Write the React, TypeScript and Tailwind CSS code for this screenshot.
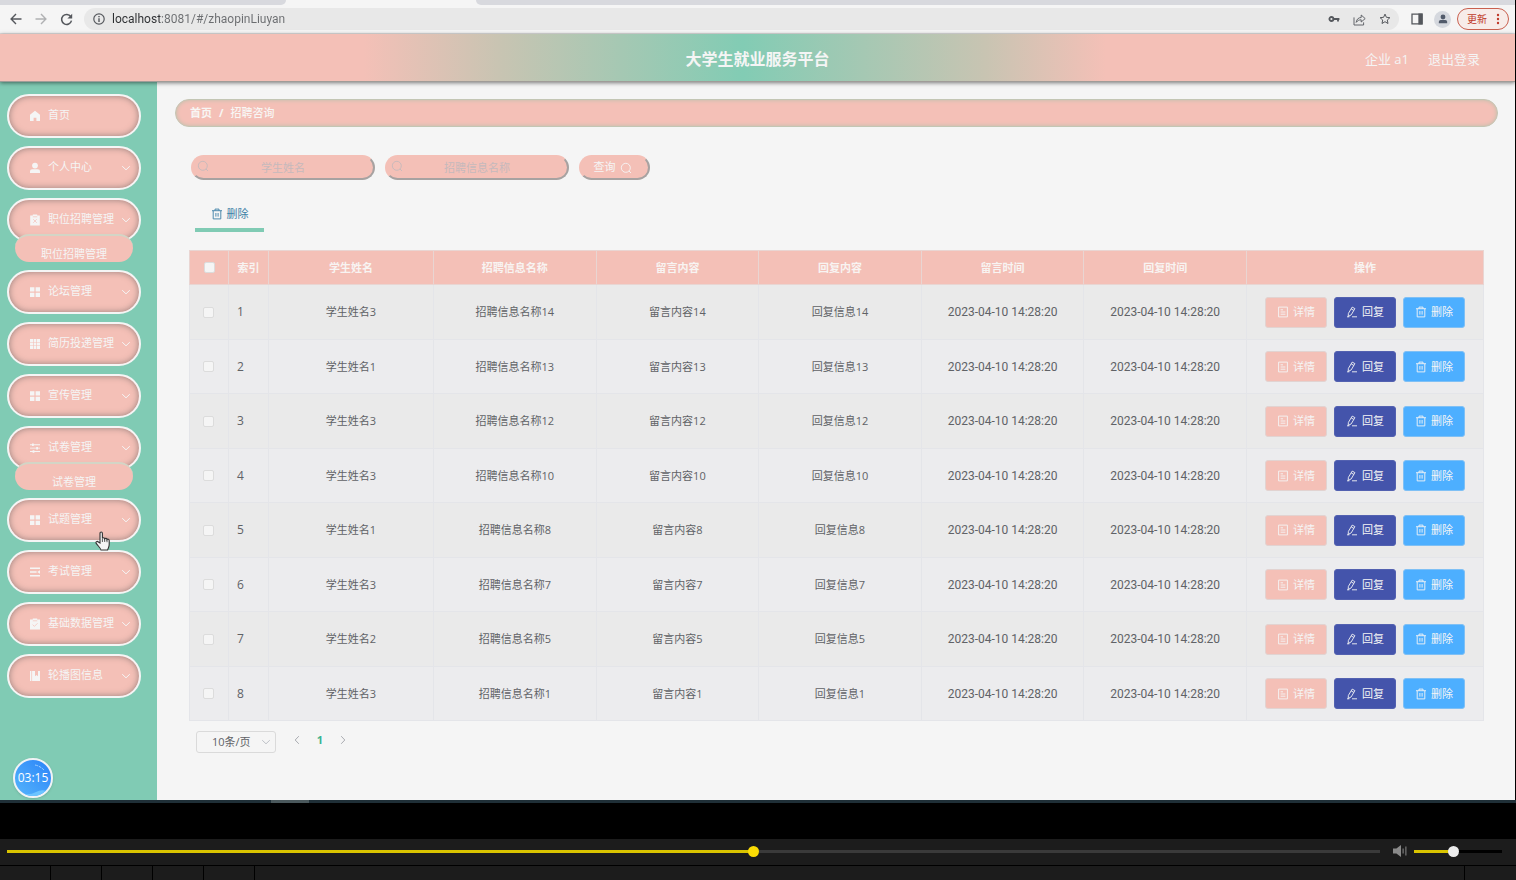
import React, { useState } from 'react';
import clsx from 'clsx';

type IconProps = { className?: string };

const HomeIcon = ({ className }: IconProps) => (
    <svg viewBox="0 0 12 12" className={className} fill="currentColor">
        <path d="M6 .8 11 4.8V11H7.4V7.8H4.6V11H1V4.8z" />
    </svg>
);

const UserIcon = ({ className }: IconProps) => (
    <svg viewBox="0 0 12 12" className={className} fill="currentColor">
        <circle cx="6" cy="3.6" r="2.9" />
        <path d="M1 11V9.3Q1 7.2 3.2 7.2H8.8Q11 7.2 11 9.3V11z" />
    </svg>
);

const ReleaseIcon = ({ className }: IconProps) => (
    <svg viewBox="0 0 12 12" className={className}>
        <path fill="currentColor" d="M1.2 1.4H3.8V.4H8.2V1.4H10.8V11.6H1.2z" />
        <path stroke="#f4c0b7" strokeWidth=".7" fill="none" d="M3.8 2.8H8.2M4.2 5.2 7.8 8.8M7.8 5.2 4.2 8.8" />
    </svg>
);

const ClaimIcon = ({ className }: IconProps) => (
    <svg viewBox="0 0 12 12" className={className}>
        <path fill="currentColor" d="M1 1.4H3.8V.4H8.2V1.4H11V11.6H1z" />
        <path stroke="#f4c0b7" strokeWidth=".7" fill="none" d="M3.8 2.8H8.2M3.6 6.6 5.4 8.4 8.6 5.2" />
    </svg>
);

const MenuIcon = ({ className }: IconProps) => (
    <svg viewBox="0 0 12 12" className={className} fill="currentColor">
        <path d="M1 1.2H5.4V5.4H1zM6.6 1.2H11V5.4H6.6zM1 6.8H5.4V11H1zM6.6 6.8H11V11H6.6z" />
    </svg>
);

const GridIcon = ({ className }: IconProps) => (
    <svg viewBox="0 0 12 12" className={className} fill="currentColor">
        <path d="M1 1H4V4H1zM4.6 1H7.4V4H4.6zM8 1H11V4H8zM1 4.6H4V7.4H1zM4.6 4.6H7.4V7.4H4.6zM8 4.6H11V7.4H8zM1 8H4V11H1zM4.6 8H7.4V11H4.6zM8 8H11V11H8z" />
    </svg>
);

const OperationIcon = ({ className }: IconProps) => (
    <svg viewBox="0 0 12 12" className={className} fill="currentColor">
        <path d="M1 2.3H11V3.2H1zM1 5.7H11V6.6H1zM1 9.1H11V10H1z" />
        <path d="M3 1.5H4.8V4H3zM7.2 4.9H9V7.4H7.2zM3.6 8.3H5.4V10.8H3.6z" />
    </svg>
);

const FoldIcon = ({ className }: IconProps) => (
    <svg viewBox="0 0 12 12" className={className} fill="currentColor">
        <path d="M1 1.6H11V3H1zM1 5.3H7.6V6.7H1zM1 9H11V10.4H1zM11 4.2V7.8L8.2 6z" />
    </svg>
);

const ManageIcon = ({ className }: IconProps) => (
    <svg viewBox="0 0 12 12" className={className} fill="currentColor">
        <path d="M1 1H2.4V11H1zM3.1 1H6V6.3L7.5 5.1 9 6.3V1H11V11H3.1z" />
    </svg>
);

const ChevronIcon = ({ className }: IconProps) => (
    <svg viewBox="0 0 10 10" className={className} fill="none" stroke="currentColor">
        <path d="M1.2 3.2 5 6.8 8.8 3.2" />
    </svg>
);

const SearchIcon = ({ className }: IconProps) => (
    <svg viewBox="0 0 12 12" className={className} fill="none" stroke="currentColor" strokeWidth=".9">
        <circle cx="5.8" cy="5.8" r="4.5" />
        <path d="M9 9 11 11" />
    </svg>
);

const TrashIcon = ({ className }: IconProps) => (
    <svg viewBox="0 0 12 12" className={className} fill="none" stroke="currentColor" strokeWidth=".9">
        <path d="M1 2.7H11M4 2.6V1.1H8V2.6M2.2 2.9V10.9H9.8V2.9M4.9 5V8.6M7.1 5V8.6" />
    </svg>
);

const DocumentIcon = ({ className }: IconProps) => (
    <svg viewBox="0 0 12 12" className={className} fill="none" stroke="currentColor" strokeWidth=".9">
        <path d="M1.6 1.1H10.4V10.9H1.6zM3.6 3.8H6M3.6 6H8.4M3.6 8.2H8.4" />
    </svg>
);

const EditIcon = ({ className }: IconProps) => (
    <svg viewBox="0 0 12 12" className={className} fill="none" stroke="currentColor" strokeWidth=".9">
        <path d="M6.2 1.1 8.9 2.6 5.2 8.9 2.2 10.4 2.4 7.4zM5.2 2.9 7.8 4.4M1 10.8H3.4M6 10.8H11" />
    </svg>
);

const MENU = [
    { label: '首页', icon: HomeIcon, leaf: true },
    { label: '个人中心', icon: UserIcon },
    { label: '职位招聘管理', icon: ReleaseIcon, child: '职位招聘管理' },
    { label: '论坛管理', icon: MenuIcon },
    { label: '简历投递管理', icon: GridIcon },
    { label: '宣传管理', icon: MenuIcon },
    { label: '试卷管理', icon: OperationIcon, child: '试卷管理' },
    { label: '试题管理', icon: MenuIcon },
    { label: '考试管理', icon: FoldIcon },
    { label: '基础数据管理', icon: ClaimIcon },
    { label: '轮播图信息', icon: ManageIcon },
];

const COLUMNS = ['学生姓名', '招聘信息名称', '留言内容', '回复内容', '留言时间', '回复时间'];

const TIME = '2023-04-10 14:28:20';

const ROWS = [
    { student: 3, no: 14 },
    { student: 1, no: 13 },
    { student: 3, no: 12 },
    { student: 3, no: 10 },
    { student: 1, no: 8 },
    { student: 3, no: 7 },
    { student: 2, no: 5 },
    { student: 3, no: 1 },
];

function BrowserBar() {
    return (
        <div className="bg-[#f5f5f5]">
            <div className="flex h-[5px] bg-[#f5f5f5]">
                <div className="w-[286px] rounded-br-md bg-[#d8d9de]" />
                <div className="w-[190px]" />
                <div className="flex-1 rounded-bl-md bg-[#d8d9de]" />
            </div>
            <div className="flex h-[29px] items-center border-b border-[#e0e0e0] pl-[10px] pr-[6px] text-[#55585d]">
                <button aria-label="Back" className="mr-[13px]">
                    <svg viewBox="0 0 12 12" className="size-3" fill="none" stroke="currentColor" strokeWidth="1.4">
                        <path d="M11.5 6H1.2M6 1 1.1 6 6 11" />
                    </svg>
                </button>
                <button aria-label="Forward" className="mr-[13px] text-[#b0b1b3]">
                    <svg viewBox="0 0 12 12" className="size-3" fill="none" stroke="currentColor" strokeWidth="1.4">
                        <path d="M.5 6H10.8M6 1 10.9 6 6 11" />
                    </svg>
                </button>
                <button aria-label="Reload" className="mr-[11px]">
                    <svg viewBox="0 0 13 13" className="size-[13px]" fill="none" stroke="currentColor" strokeWidth="1.5">
                        <path d="M10.8 3.6A5 5 0 1 0 11.5 7.6" />
                        <path fill="currentColor" stroke="none" d="M12.2.8V5.6H7.4z" />
                    </svg>
                </button>
                <div className="flex h-[22px] flex-1 items-center rounded-full bg-[#e8e8e8] pl-[9px] pr-2">
                    <svg viewBox="0 0 12 12" className="mr-[7px] size-3" fill="none" stroke="currentColor" strokeWidth="1.2">
                        <circle cx="6" cy="6" r="5.2" />
                        <path d="M6 5.2V9M6 3V4.2" strokeWidth="1.4" />
                    </svg>
                    <input
                        aria-label="Address"
                        defaultValue="localhost:8081/#/zhaopinLiuyan"
                        className="h-5 min-w-0 flex-1 bg-linear-to-r from-[#2c2e31] from-[48px] to-[#6b6d70] to-[48px] bg-clip-text font-[Roboto] text-[12px] leading-5 text-transparent outline-none"
                    />
                    <div className="flex items-center gap-[13px]">
                        <svg viewBox="0 0 12 12" className="size-3" fill="none" stroke="currentColor">
                            <circle cx="3.4" cy="6" r="2" strokeWidth="1.8" />
                            <path d="M5.6 6H11.4M10 6V8.6" strokeWidth="1.8" />
                        </svg>
                        <svg viewBox="0 0 13 13" className="size-[13px]" fill="none" stroke="currentColor" strokeWidth=".9">
                            <path d="M1 4.4V12H10.6V9.4" />
                            <path d="M3.2 9.4C3.6 6.2 5.4 4.6 8.2 4.5V2L12.2 5.6 8.2 9V6.8C6 6.8 4.5 7.6 3.2 9.4z" />
                        </svg>
                        <svg viewBox="0 0 12 12" className="size-3" fill="none" stroke="currentColor">
                            <path d="M6 1.1 7.4 4.3 10.9 4.7 8.3 7 9 10.5 6 8.7 3 10.5 3.7 7 1.1 4.7 4.6 4.3z" />
                        </svg>
                    </div>
                </div>
                <svg viewBox="0 0 12 12" className="ml-3 size-3" fill="none" stroke="currentColor" strokeWidth="1.3">
                    <path d="M1 1.2H11V10.8H1z" />
                    <path fill="currentColor" d="M8 1.2H11V10.8H8z" />
                </svg>
                <span className="ml-[11px] flex size-[17px] items-center justify-center rounded-full bg-[#d5d8de] text-[#525b6b]">
                    <UserIcon className="size-[10px]" />
                </span>
                <button className="ml-[6px] flex h-[22px] items-center gap-[9px] rounded-full border border-[#c9604f] bg-[#f7ece9] pl-[9px] pr-2 text-[10px] text-[#c03a2b]">
                    更新
                    <svg viewBox="0 0 4 12" className="h-3 w-1" fill="currentColor">
                        <circle cx="2" cy="2" r="1.2" />
                        <circle cx="2" cy="6" r="1.2" />
                        <circle cx="2" cy="10" r="1.2" />
                    </svg>
                </button>
            </div>
        </div>
    );
}

function Header() {
    return (
        <header className="relative z-10 grid h-12 grid-cols-[1fr_auto_1fr] items-center border-b border-[#a09c98] bg-[linear-gradient(90deg,#f4c0b7_24%,#c8c4b2_33%,#82ccb4_49%,#c8c4b2_65%,#f4c0b7_73%)] px-[35px] pt-[2px] text-[#f5f5f5] shadow-[0_1px_4px_rgba(0,0,0,0.5)]">
            <h1 className="col-start-2 text-[16px] leading-6 font-bold">大学生就业服务平台</h1>
            <div className="flex justify-end gap-[19px] text-[13px] leading-5">
                <span>企业 a1</span>
                <a href="#/login">退出登录</a>
            </div>
        </header>
    );
}

function Sidebar() {
    return (
        <aside className="relative w-[157px] shrink-0 bg-[#80cbb4] pt-3">
            <nav>
                <ul className="flex flex-col gap-2 pl-[7px] pr-4">
                    {MENU.map(({ label, icon: Icon, leaf, child }) => (
                        <li key={label}>
                            <a
                                href="#/"
                                className="flex h-11 items-center rounded-full border-2 border-[#f5f5f5] bg-[#f4c0b7] pb-px pl-5 pr-2 text-[11px] text-[#f5f5f5] shadow-[inset_0_0_6px_rgba(100,90,90,0.65)]"
                            >
                                <Icon className="mr-[7px] size-3" />
                                <span className="flex-1 whitespace-nowrap">{label}</span>
                                {!leaf && <ChevronIcon className="size-[10px]" />}
                            </a>
                            {child && (
                                <a
                                    href="#/"
                                    className="relative mx-2 -mt-2 flex h-7 items-end justify-center rounded-full border-t-2 border-[#d3d5c6] bg-[#f4c0b7] text-[11px] leading-4 text-[#f5f5f5]"
                                >
                                    {child}
                                </a>
                            )}
                        </li>
                    ))}
                </ul>
            </nav>

            {/* Recording timer */}
            <div className="absolute bottom-[2px] left-[13px] flex size-10 items-center justify-center overflow-hidden rounded-full border-2 border-[#f0f3f6] bg-linear-to-tr from-[#56b4fb] to-[#2b83f8] text-[12px] text-white shadow-sm">
                <svg viewBox="0 0 36 36" className="absolute inset-0 size-9" fill="none">
                    <path d="M8 34Q16 35 21 32T32 31L28 36H10z" fill="#6cc4ff" />
                    <path d="M20 5Q25 6 29 10" stroke="#9fd0ff" strokeDasharray="3 1" />
                </svg>
                <span className="relative">03:15</span>
            </div>

            {/* Mouse pointer */}
            <svg viewBox="0 0 15 20" className="absolute left-[95px] top-[449px] h-5 w-[15px]" fill="#f5f5f5" stroke="#333" strokeWidth="1.1">
                <path d="M5 12V2.4C5 .6 7.4.6 7.4 2.4V7.6C7.6 6.4 9.6 6.6 9.7 8 10.2 7 11.9 7.2 12 8.6 12.6 7.8 14.2 8.2 14.2 9.6V13.6C14.2 16 13.2 16.8 12.6 19H6C5.6 17.2 3.4 15.4 1.2 12.4.4 10.8 2.2 9.8 3.4 11z" />
                <path d="M7.4 8V11M9.7 8.4V11M12 9V11.2" strokeWidth=".8" />
            </svg>
        </aside>
    );
}

function SearchField({ label }: { label: string }) {
    return (
        <label className="relative block">
            <SearchIcon className="absolute left-[6px] top-[5px] size-3 text-[#c4b9bb]" />
            <input
                type="text"
                placeholder={label}
                aria-label={label}
                className="block h-[25px] w-[184px] rounded-full border-2 border-t-[#f4c0b7] border-r-[#a7a2a1] border-b-[#a7a2a1] border-l-[#f4c0b7] bg-[#f4c0b7] px-3 text-center text-[11px] text-gray-700 outline-none placeholder:text-[#c5b9bc]"
            />
        </label>
    );
}

function ActionButton({ icon: Icon, className, children }: { icon: React.FC<IconProps>; className: string; children: string }) {
    return (
        <button
            className={clsx(
                'flex h-[31px] flex-1 items-center justify-center gap-1 rounded-[3px] border text-[11px] text-[#f5f5f5]',
                className
            )}
        >
            <Icon className="size-3" />
            {children}
        </button>
    );
}

function Checkbox({ label }: { label: string }) {
    return (
        <input
            type="checkbox"
            aria-label={label}
            className="mx-auto block size-[11px] appearance-none rounded-[2px] border border-[#dcdcdc] bg-[#f5f5f5] checked:bg-[#82ccb4]"
        />
    );
}

function MessageTable() {
    return (
        <table className="w-full table-fixed border-collapse text-[11px] leading-4 text-[#606266]">
            <colgroup>
                <col className="w-[39px]" />
                <col className="w-10" />
                <col className="w-[165px]" />
                <col span={5} />
                <col className="w-[237px]" />
            </colgroup>
            <thead>
                <tr className="h-[34px] bg-[#f4c0b7] text-[#f8f4f2] *:border *:border-[#e9d5d2]">
                    <th>
                        <Checkbox label="全选" />
                    </th>
                    <th>索引</th>
                    {COLUMNS.map((column) => (
                        <th key={column}>{column}</th>
                    ))}
                    <th>操作</th>
                </tr>
            </thead>
            <tbody className="text-center">
                {ROWS.map(({ student, no }, index) => (
                    <tr key={no} className="h-[54px] odd:h-[55px] odd:bg-[#eaeaea] even:bg-[#ececee] *:border *:border-[#e4e5e9]">
                        <td className="pr-[2px]">
                            <Checkbox label={`选择第${index + 1}行`} />
                        </td>
                        <td className="pl-2 text-left text-[12px]">{index + 1}</td>
                        <td>学生姓名{student}</td>
                        <td>招聘信息名称{no}</td>
                        <td>留言内容{no}</td>
                        <td>回复信息{no}</td>
                        <td className="font-[Roboto] text-[12px]">{TIME}</td>
                        <td className="font-[Roboto] text-[12px]">{TIME}</td>
                        <td className="px-[18px]">
                            <div className="flex gap-[7px]">
                                <ActionButton icon={DocumentIcon} className="border-[#e2d3d1] bg-[#f4c0b7]">
                                    详情
                                </ActionButton>
                                <ActionButton icon={EditIcon} className="border-[#5361b0] bg-[#4454ab]">
                                    回复
                                </ActionButton>
                                <ActionButton icon={TrashIcon} className="border-[#7fc0f5] bg-[#4dafff]">
                                    删除
                                </ActionButton>
                            </div>
                        </td>
                    </tr>
                ))}
            </tbody>
        </table>
    );
}

function Pagination() {
    return (
        <div className="mt-[10px] flex items-start pl-2 text-[11px] text-[#606266]">
            <div className="relative">
                <select
                    aria-label="每页条数"
                    className="block h-[22px] w-20 appearance-none rounded-[3px] border border-[#dadada] bg-[#f5f5f5] pl-[15px] text-[11px] outline-none"
                >
                    <option>10条/页</option>
                </select>
                <ChevronIcon className="pointer-events-none absolute right-[5px] top-[6px] size-[10px] text-[#bfc2c8]" />
            </div>
            <div className="ml-4 flex h-[18px] items-center gap-[14px] text-[#a9abb0]">
                <button aria-label="上一页">
                    <ChevronIcon className="size-[10px] rotate-90" />
                </button>
                <button className="w-2 font-bold text-[#3db38f]">1</button>
                <button aria-label="下一页">
                    <ChevronIcon className="size-[10px] -rotate-90" />
                </button>
            </div>
        </div>
    );
}

function Slider({ label, initial, rest, className }: { label: string; initial: number; rest: string; className: string }) {
    const [value, setValue] = useState(initial);

    return (
        <input
            type="range"
            aria-label={label}
            min={0}
            max={1000}
            value={value}
            onChange={(e) => setValue(Number(e.target.value))}
            style={{ backgroundImage: `linear-gradient(90deg, #d9c400 ${value / 10}%, ${rest} ${value / 10}%)` }}
            className={clsx(
                'h-[3px] appearance-none [&::-webkit-slider-thumb]:size-[11px] [&::-webkit-slider-thumb]:appearance-none [&::-webkit-slider-thumb]:rounded-full',
                className
            )}
        />
    );
}

function Player() {
    return (
        <footer className="bg-black">
            <div className="flex h-[3px] bg-[#1f2f37]">
                <div className="ml-[271px] w-[38px] bg-[#4a585c]" />
            </div>
            <div className="h-9" />
            <div className="flex h-[26px] items-center bg-[#1c1c1c] pb-[2px] pl-[7px] pr-[14px]">
                <Slider label="播放进度" initial={544} rest="#3a3a3a" className="min-w-0 flex-1 [&::-webkit-slider-thumb]:bg-[#fbdc05]" />
                <button aria-label="静音" className="ml-3 mr-[6px]">
                    <svg viewBox="0 0 16 14" className="h-[14px] w-4" fill="#8a8a8a">
                        <path d="M1 4.4H4.4L9 1V13L4.4 9.6H1z" />
                        <path d="M10.6 4.6H11.6V9.4H10.6zM13.4 2.6H14.4V11.4H13.4z" />
                    </svg>
                </button>
                <Slider label="音量" initial={440} rest="#000000" className="w-[88px] [&::-webkit-slider-thumb]:bg-[#ececec]" />
            </div>
            <div className="mt-px flex h-[14px] gap-px">
                {[0, 1, 2, 3, 4].map((cell) => (
                    <div key={cell} className="w-[50px] bg-[#1c1c1c]" />
                ))}
                <div className="flex-1 bg-[#1c1c1c]" />
                <div className="w-[51px] bg-[#1c1c1c]" />
            </div>
        </footer>
    );
}

export default function App() {
    return (
        <div className="flex min-h-screen flex-col bg-black font-['Open_Sans','Noto_Sans_CJK_SC',sans-serif]">
            <div className="mr-px flex flex-1 flex-col bg-[#f5f5f5]">
                <BrowserBar />
                <Header />
                <div className="flex flex-1">
                    <Sidebar />
                    <main className="min-w-0 flex-1 px-[17px] pt-[17px]">
                        <nav className="ml-px flex h-7 items-center gap-[7px] rounded-full border border-[#c3c6b4] bg-[#f4c0b7] px-[14px] text-[11px] font-medium text-[#f8f6f4] shadow-[inset_0_0_4px_#b9c0ac]">
                            <a href="#/" className="font-bold">
                                首页
                            </a>
                            <span className="font-bold">/</span>
                            <span>招聘咨询</span>
                        </nav>

                        <div className="px-[14px] pt-7">
                            <form className="flex gap-[10px] pl-[3px]" onSubmit={(e) => e.preventDefault()}>
                                <SearchField label="学生姓名" />
                                <SearchField label="招聘信息名称" />
                                <button className="flex h-[25px] w-[71px] items-center justify-center gap-1 rounded-full border-2 border-t-[#f4c0b7] border-r-[#a7a2a1] border-b-[#a7a2a1] border-l-[#f4c0b7] bg-[#f4c0b7] pr-1 text-[11px] text-[#f5f5f5]">
                                    查询
                                    <SearchIcon className="size-3" />
                                </button>
                            </form>

                            <button className="ml-[7px] mt-4 flex h-9 w-[69px] items-center justify-center gap-1 border-b-4 border-[#80cbb4] pt-1 text-[11px] text-[#3c7fa6]">
                                <TrashIcon className="size-3" />
                                删除
                            </button>

                            <div className="mt-[18px] pl-px">
                                <MessageTable />
                            </div>
                            <Pagination />
                        </div>
                    </main>
                </div>
            </div>
            <Player />
        </div>
    );
}
